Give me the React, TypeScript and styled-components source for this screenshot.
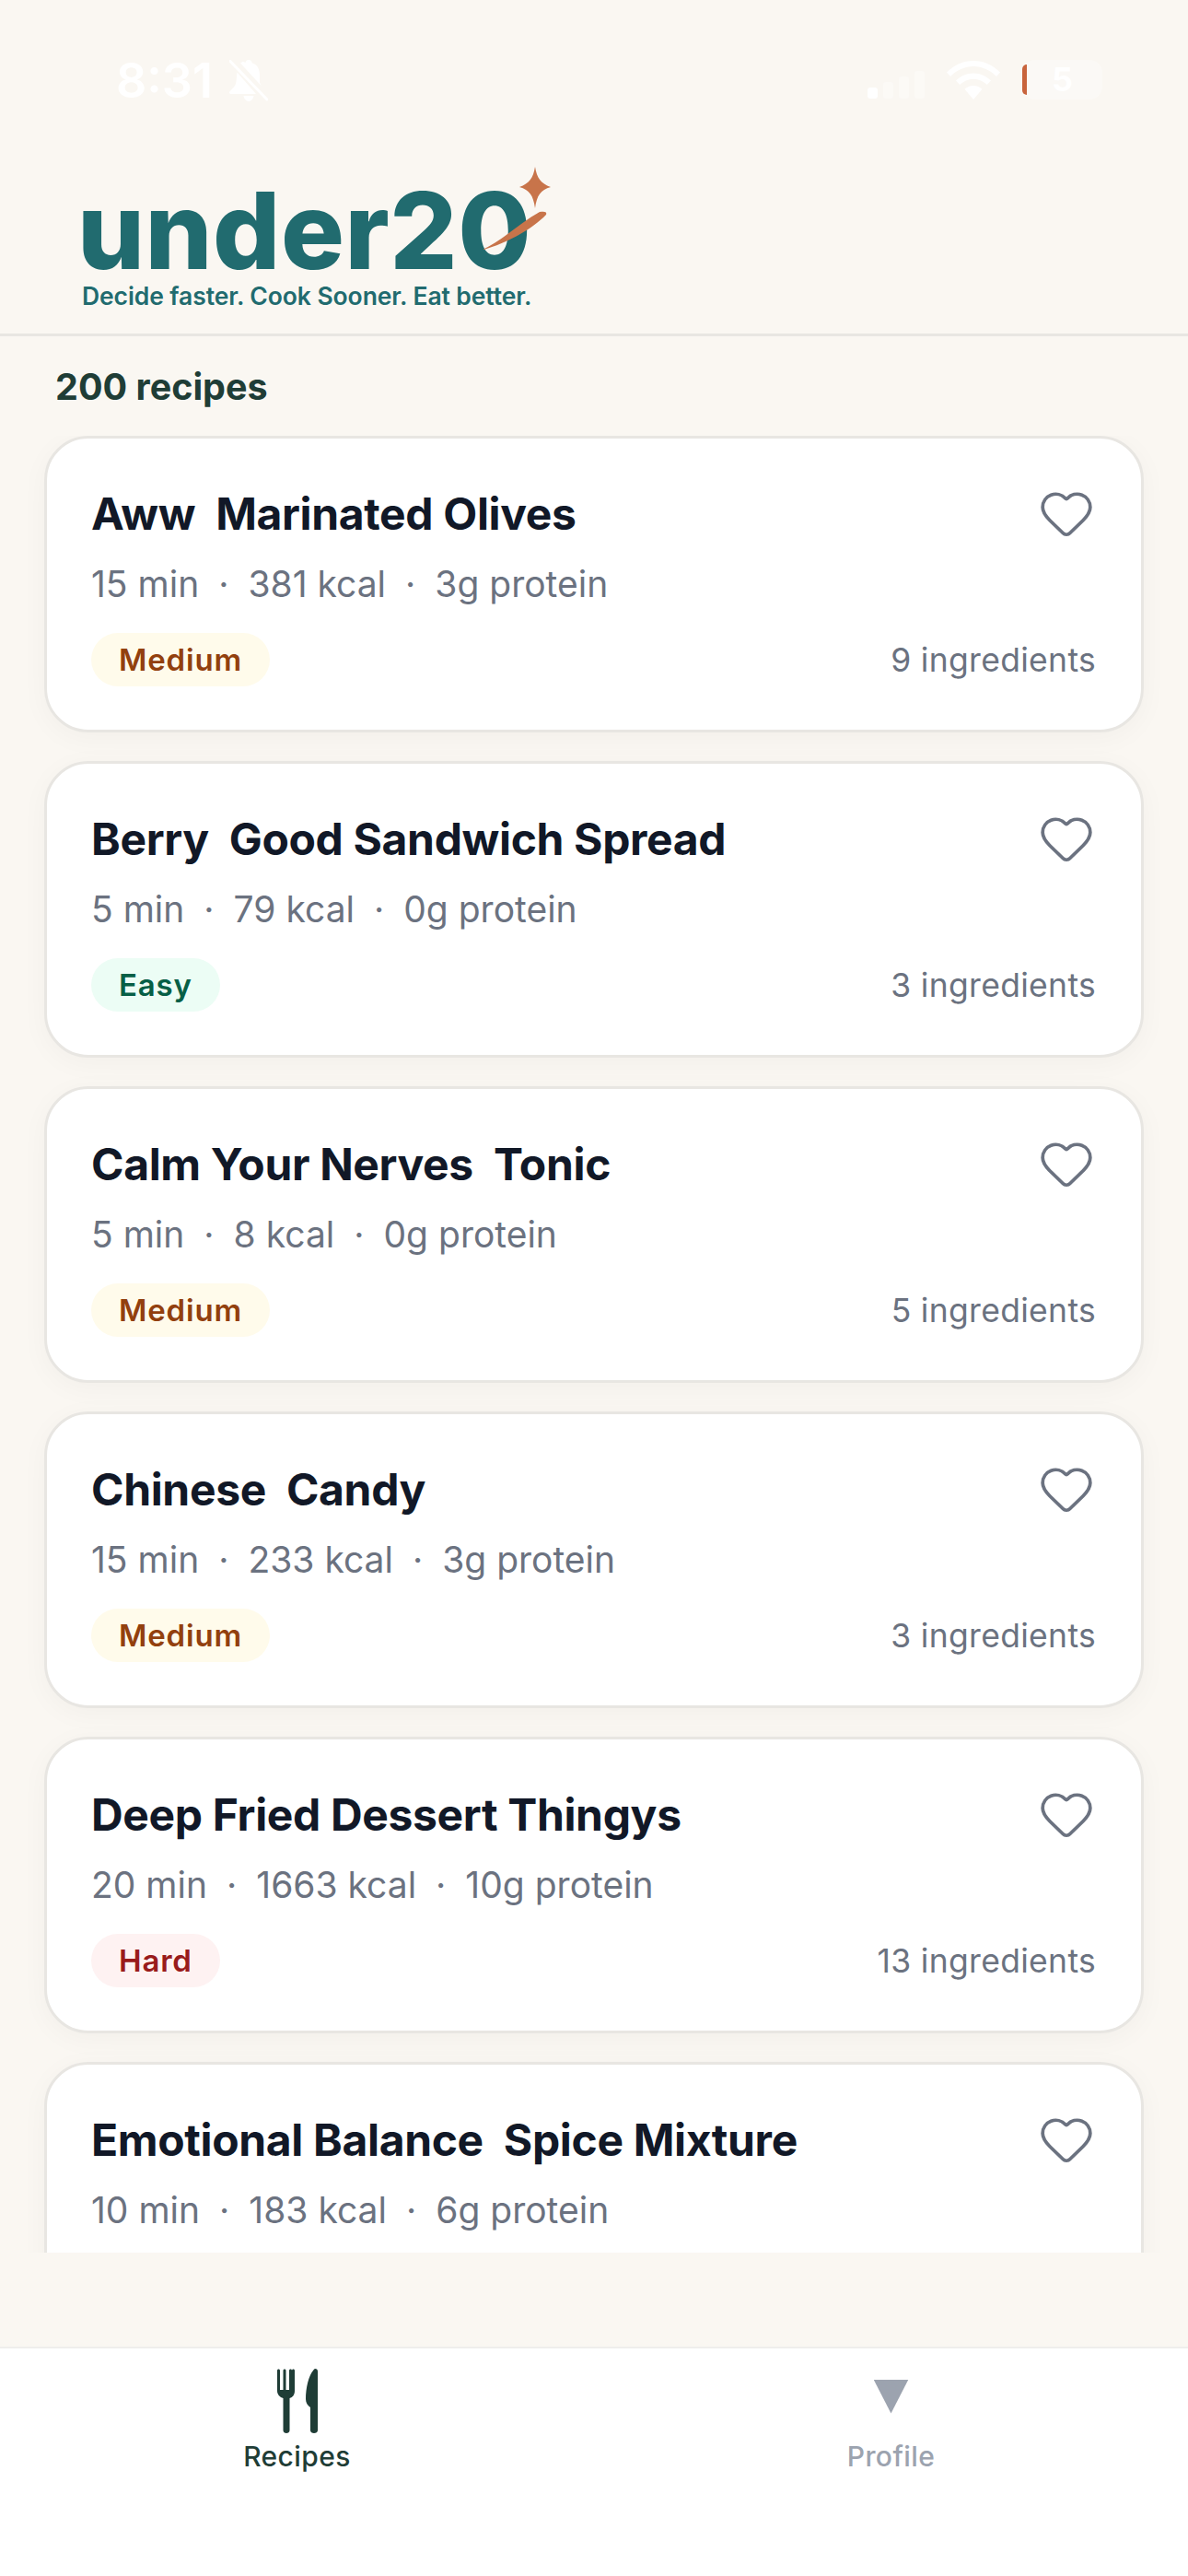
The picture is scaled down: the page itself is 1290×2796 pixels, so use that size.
import React from 'react';
import styled, { createGlobalStyle } from 'styled-components';
import { Heart } from 'lucide-react';

type Difficulty = 'Easy' | 'Medium' | 'Hard';

interface Recipe {
  name: string;
  minutes: number;
  kcal: number;
  protein: number;
  difficulty: Difficulty;
  ingredients: number;
}

const recipes: Recipe[] = [
  { name: 'Aww  Marinated Olives', minutes: 15, kcal: 381, protein: 3, difficulty: 'Medium', ingredients: 9 },
  { name: 'Berry  Good Sandwich Spread', minutes: 5, kcal: 79, protein: 0, difficulty: 'Easy', ingredients: 3 },
  { name: 'Calm Your Nerves  Tonic', minutes: 5, kcal: 8, protein: 0, difficulty: 'Medium', ingredients: 5 },
  { name: 'Chinese  Candy', minutes: 15, kcal: 233, protein: 3, difficulty: 'Medium', ingredients: 3 },
  { name: 'Deep Fried Dessert Thingys', minutes: 20, kcal: 1663, protein: 10, difficulty: 'Hard', ingredients: 13 },
  { name: 'Emotional Balance  Spice Mixture', minutes: 10, kcal: 183, protein: 6, difficulty: 'Easy', ingredients: 7 },
];

const badgeColors: Record<Difficulty, { bg: string; fg: string }> = {
  Easy: { bg: '#ecfdf5', fg: '#065f46' },
  Medium: { bg: '#fffbeb', fg: '#92400e' },
  Hard: { bg: '#fef2f2', fg: '#991b1b' },
};

const RecipeCard = ({ recipe }: { recipe: Recipe }) => (
  <Card>
    <TitleRow>
      <Title>{recipe.name}</Title>
      <FavButton aria-label="Favourite">
        <Heart size={62} strokeWidth={1.45} color="#6b7280" />
      </FavButton>
    </TitleRow>
    <Meta>
      {recipe.minutes} min<Dot>·</Dot>
      {recipe.kcal} kcal<Dot>·</Dot>
      {recipe.protein}g protein
    </Meta>
    <CardFooter>
      <Badge $level={recipe.difficulty}>{recipe.difficulty}</Badge>
      <Ingredients>{recipe.ingredients} ingredients</Ingredients>
    </CardFooter>
  </Card>
);

export default function App() {
  return (
    <Screen>
      <GlobalStyle />
      <StatusBar>
        <StatusLeft>
          <Clock>8:31</Clock>
          <svg width="42" height="45" viewBox="0 0 42 45" fill="#fff">
            <path d="M21 0c2.400 0 3.600 1.800 3.800 3.600 6 1.600 8.200 7 8.200 13v8l1.800 3.600L12 3.600C14 2 16 1.200 17.200 3.600 17.600 1.800 18.800 0 21 0z" />
            <path d="M8.500 13.500 29 37H1.500C0 37-.5 35.500.5 34.300 3 31.500 6 29 7 26c1-3.500.8-8.500 1.500-12.500z" />
            <path d="M15.500 39h11c-.6 3.500-3 6-5.500 6s-4.900-2.500-5.500-6z" />
            <path d="M1 1.500 41 43" stroke="#fff" strokeWidth="3" strokeLinecap="round" />
          </svg>
        </StatusLeft>
        <StatusRight>
          <svg width="62" height="30" viewBox="0 0 62 30" fill="#fff">
            <rect x="0" y="18" width="11" height="12" rx="3" />
            <rect x="17" y="12" width="11" height="18" rx="3" opacity="0.35" />
            <rect x="34" y="6" width="11" height="24" rx="3" opacity="0.35" />
            <rect x="51" y="0" width="11" height="30" rx="3" opacity="0.35" />
          </svg>
          <svg width="58" height="42" viewBox="0 0 58 42" fill="#fff">
            <path d="M29 0c11 0 21 4.500 29 12.500l-4 4.500C47 10 38.500 6 29 6S11 10 4 17L0 12.500C8 4.500 18 0 29 0z" />
            <path d="M29 13.500c7.500 0 14 3 19 8l-4.200 4.500c-4-3.800-9-6.200-14.800-6.200S18.200 22.200 14.200 26L10 21.500c5-5 11.500-8 19-8z" />
            <path d="M29 27c3.800 0 7 1.500 9.500 3.800L29 42l-9.500-11.200C22 28.500 25.200 27 29 27z" />
          </svg>
          <Battery>
            <BatteryLevel />5
          </Battery>
        </StatusRight>
      </StatusBar>

      <Header>
        <Logo>
          <Wordmark>under20</Wordmark>
          <Tagline>Decide faster. Cook Sooner. Eat better.</Tagline>
          <LogoSpark width="84" height="96" viewBox="0 0 84 96">
            <path d="M57 0c2 12 6 18 17 22-11 3-15 9-17 23-2-14-6-20-17-23 11-4 15-10 17-22z" fill="#c8744a" />
            <path d="M62 49c6-1 8 0 7 3C55 67 25 84 0 90c20-9 42-30 62-41z" fill="#c8744a" />
          </LogoSpark>
        </Logo>
      </Header>

      <Count>200 recipes</Count>

      <List>
        {recipes.map((recipe) => (
          <RecipeCard key={recipe.name} recipe={recipe} />
        ))}
      </List>

      <TabBar>
        <Tab $active>
          <TabIconSlot>
            <svg width="44" height="70" viewBox="0 0 44 70" fill="#1f3d36">
              <path d="M0 2c0-2 3-2 3 0v21h3.500V2c0-2 3-2 3 0v21h3.500V2c0-2 3-2 3 0v21h0V2c0-2 3-2 3 0v22c0 4-2 7-5.500 8v35c0 4-7 4-7 0V32C3 31 0 28 0 24V2z" />
              <path d="M41 0c2 0 3 1 3 3v64c0 4-8 4-8 0V42c-3-2-5-5-5-9 0-12 3-25 8-31 .7-1 1.500-2 2-2z" />
            </svg>
          </TabIconSlot>
          <TabLabel $active>Recipes</TabLabel>
        </Tab>
        <Tab>
          <TabIconSlot>
            <ProfileGlyph />
          </TabIconSlot>
          <TabLabel>Profile</TabLabel>
        </Tab>
      </TabBar>
    </Screen>
  );
}

const GlobalStyle = createGlobalStyle`
  html, body {
    margin: 0;
    padding: 0;
    background: #faf7f2;
  }
  * {
    box-sizing: border-box;
  }
`;

const Screen = styled.div`
  width: 1290px;
  height: 2796px;
  display: flex;
  flex-direction: column;
  background: #faf7f2;
  font-family: Inter, 'Liberation Sans', sans-serif;
  overflow: hidden;
`;

const StatusBar = styled.div`
  height: 150px;
  flex: none;
  padding: 65px 93px 0 126px;
  display: flex;
  justify-content: space-between;
  align-items: flex-start;
`;

const StatusLeft = styled.div`
  display: flex;
  align-items: center;
  gap: 18px;
`;

const Clock = styled.span`
  color: #fff;
  font-size: 52px;
  line-height: 45px;
  font-weight: 600;
`;

const StatusRight = styled.div`
  display: flex;
  align-items: flex-end;
  gap: 24px;
  height: 43px;

  & svg:first-child {
    margin-bottom: 1px;
  }
`;

const Battery = styled.div`
  position: relative;
  width: 87px;
  height: 43px;
  border-radius: 14px;
  background: rgba(255, 255, 255, 0.3);
  color: #fff;
  font-size: 36px;
  font-weight: 700;
  line-height: 43px;
  text-align: center;
`;

const BatteryLevel = styled.div`
  position: absolute;
  left: 0;
  top: 5px;
  bottom: 5px;
  width: 5px;
  border-radius: 5px 0 0 5px;
  background: #c8643c;
`;

const Header = styled.header`
  height: 215px;
  flex: none;
  padding: 53px 0 0 90px;
  border-bottom: 3px solid #e8e6e2;
`;

const Logo = styled.div`
  position: relative;
  width: 510px;
  color: #216b6f;
`;

const Wordmark = styled.div`
  font-size: 115px;
  font-weight: 800;
  line-height: 96px;
  letter-spacing: 0.5px;
  margin-left: -6px;
  white-space: nowrap;
`;

const Tagline = styled.div`
  margin-top: 7px;
  margin-left: -1px;
  font-size: 26.500px;
  line-height: 30px;
  font-weight: 600;
  letter-spacing: -0.1px;
  white-space: nowrap;
`;

const LogoSpark = styled.svg`
  position: absolute;
  left: 434px;
  top: -22px;
`;

const Count = styled.div`
  flex: none;
  height: 108px;
  padding: 30px 0 0 60px;
  color: #1f3d36;
  font-size: 39.500px;
  line-height: 50px;
  font-weight: 700;
`;

const List = styled.main`
  flex: 1;
  min-height: 0;
  margin-bottom: 102px;
  padding: 0 48px;
  display: flex;
  flex-direction: column;
  gap: 31px;
  overflow: hidden;
`;

const Card = styled.article`
  flex: none;
  height: 322px;
  padding: 48px;
  background: #fff;
  border: 3px solid #e8e6e2;
  border-radius: 48px;
  box-shadow: 0 6px 30px rgba(0, 0, 0, 0.035);
`;

const TitleRow = styled.div`
  display: flex;
  justify-content: space-between;
  align-items: center;
  height: 64px;
  margin-top: 2px;
`;

const Title = styled.h3`
  margin: 0;
  color: #111827;
  font-size: 48px;
  line-height: 64px;
  font-weight: 700;
  letter-spacing: -0.35px;
  white-space: pre;
`;

const FavButton = styled.button`
  display: flex;
  padding: 0;
  margin-top: -3px;
  margin-right: 2px;
  border: none;
  background: none;
`;

const Meta = styled.div`
  margin-top: 19px;
  color: #6b7280;
  font-size: 39px;
  line-height: 50px;
  white-space: pre;
`;

const Dot = styled.span`
  margin: 0 21px;
`;

const CardFooter = styled.div`
  margin-top: 28px;
  display: flex;
  justify-content: space-between;
  align-items: center;
`;

const Badge = styled.span<{ $level: Difficulty }>`
  height: 58px;
  padding: 0 30px;
  border-radius: 29px;
  display: flex;
  align-items: center;
  background: ${({ $level }) => badgeColors[$level].bg};
  color: ${({ $level }) => badgeColors[$level].fg};
  font-size: 33px;
  font-weight: 600;
  letter-spacing: 0.8px;
`;

const Ingredients = styled.span`
  color: #6b7280;
  font-size: 35.500px;
  letter-spacing: 0.3px;
  margin-right: 1px;
`;

const TabBar = styled.nav`
  flex: none;
  height: 249px;
  background: #fff;
  border-top: 2px solid #efeeec;
  display: grid;
  grid-template-columns: 1fr 1fr;
`;

const Tab = styled.div<{ $active?: boolean }>`
  display: flex;
  flex-direction: column;
  align-items: center;
  padding-top: 22px;
`;

const TabIconSlot = styled.div`
  height: 70px;
  display: flex;
  align-items: center;
  justify-content: center;
`;

const ProfileGlyph = styled.div`
  width: 38px;
  height: 37px;
  margin-bottom: 10px;
  clip-path: polygon(0 0, 100% 0, 50% 100%);
  background: #9ca3af;
`;

const TabLabel = styled.span<{ $active?: boolean }>`
  margin-top: 5px;
  color: ${({ $active }) => ($active ? '#1f3d36' : '#9ca3af')};
  font-size: 30px;
  line-height: 40px;
  font-weight: 500;
  letter-spacing: 0.4px;
`;
